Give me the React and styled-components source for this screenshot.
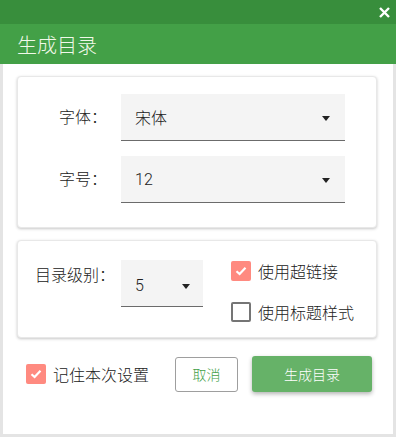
import React from "react";
import styled, { createGlobalStyle } from "styled-components";

const Global = createGlobalStyle`
  html, body { margin: 0; padding: 0; background: #fff; }
  body { font-family: Roboto, "Noto Sans CJK SC", sans-serif; }
  * { box-sizing: border-box; }
`;

const Window = styled.div`
  width: 396px;
  height: 437px;
  display: flex;
  flex-direction: column;
  background: #fff;
`;

const TopBar = styled.div`
  height: 24px;
  background: #388e3c;
  display: flex;
  align-items: center;
  justify-content: flex-end;
  padding-right: 6px;
`;

const CloseButton = styled.button`
  border: 0;
  background: transparent;
  padding: 0;
  width: 11px;
  height: 11px;
  display: flex;
  cursor: pointer;
`;

const TitleBand = styled.div`
  height: 40px;
  background: #43a047;
  display: flex;
  align-items: center;
  padding-left: 17px;
  color: #f1f8e9;
  font-size: 20px;
  font-weight: 300;
`;

const Body = styled.div`
  flex: 1;
  border: 3px solid #e4e4e4;
  border-top: 0;
  padding: 12px 16px 0 14px;
  display: flex;
  flex-direction: column;
  gap: 12px;
`;

const Card = styled.div`
  background: #fff;
  border-radius: 4px;
  border: 1px solid #e8e8e8;
  box-shadow: 0 1px 3px rgba(0, 0, 0, 0.22);
  height: ${(p) => p.$h}px;
`;

const FontCard = styled(Card)`
  display: grid;
  grid-template-columns: 48px 224px;
  column-gap: 14px;
  row-gap: 15px;
  align-content: start;
  align-items: center;
  padding: 17px 0 0 41px;
`;

const Label = styled.div`
  font-size: 16px;
  font-weight: 300;
  color: #212121;
  line-height: 22px;
  white-space: nowrap;
`;

const Field = styled.div`
  height: 47px;
  width: ${(p) => p.$w}px;
  background: #f4f4f4;
  border-bottom: 1px solid #6b6b6b;
  display: flex;
  align-items: center;
  justify-content: space-between;
  padding: 0 ${(p) => p.$pr}px 0 14px;
  font-size: 16px;
  font-weight: 300;
  color: #212121;
`;

const Arrow = styled.span`
  width: 0;
  height: 0;
  border-left: 4px solid transparent;
  border-right: 4px solid transparent;
  border-top: 5px solid #222;
  margin-top: 2px;
`;

const LevelCard = styled(Card)`
  display: flex;
  align-items: flex-start;
  padding: 19px 0 0 17px;
`;

const LevelLabel = styled(Label)`
  margin-top: 5px;
  width: 86px;
`;

const Options = styled.div`
  display: flex;
  flex-direction: column;
  gap: 19px;
  margin-left: 28px;
`;

const CheckRow = styled.label`
  display: flex;
  align-items: center;
  gap: 7px;
  height: 22px;
  font-size: 16px;
  font-weight: 300;
  color: #212121;
  white-space: nowrap;
`;

const Box = styled.span`
  width: 20px;
  height: 20px;
  border-radius: 2px;
  display: flex;
  align-items: center;
  justify-content: center;
  background: ${(p) => (p.$checked ? "#ff8a80" : "#fff")};
  border: ${(p) => (p.$checked ? "0" : "2px solid #757575")};
`;

const Footer = styled.div`
  display: flex;
  align-items: center;
  margin-top: 6px;
  padding-left: 9px;
`;

const CancelButton = styled.button`
  margin-left: 26px;
  width: 63px;
  height: 35px;
  border: 1px solid #9e9e9e;
  border-radius: 3px;
  background: #fff;
  color: #43a047;
  font-family: inherit;
  font-size: 14px;
  font-weight: 300;
  padding: 0;
`;

const PrimaryButton = styled.button`
  margin-left: 14px;
  width: 120px;
  height: 36px;
  border: 0;
  border-radius: 3px;
  background: #66b268;
  color: #fff;
  font-family: inherit;
  font-size: 14px;
  font-weight: 300;
  padding: 0;
  box-shadow: 0 2px 4px rgba(0, 0, 0, 0.3);
`;

const Value = styled.span`
  margin-top: ${(p) => p.$mt || 0}px;
`;

const Check = () => (
  <svg width="12" height="10" viewBox="0 0 12 10">
    <path d="M1.5 5.2 L4.6 8 L10.5 1.8" fill="none" stroke="#fff" strokeWidth="2.2" />
  </svg>
);

const CheckBox = ({ checked, children }) => (
  <CheckRow>
    <Box $checked={checked}>{checked && <Check />}</Box>
    {children}
  </CheckRow>
);

export default function App() {
  return (
    <>
      <Global />
      <Window>
        <TopBar>
          <CloseButton aria-label="关闭">
            <svg width="11" height="11" viewBox="0 0 11 11">
              <path d="M1 1 L10 10 M10 1 L1 10" stroke="#fff" strokeWidth="2.4" />
            </svg>
          </CloseButton>
        </TopBar>
        <TitleBand>生成目录</TitleBand>
        <Body>
          <FontCard $h={152}>
            <Label>字体：</Label>
            <Field $w={224} $pr={15}>
              宋体
              <Arrow />
            </Field>
            <Label>字号：</Label>
            <Field $w={224} $pr={15}>
              12
              <Arrow />
            </Field>
          </FontCard>
          <LevelCard $h={98}>
            <LevelLabel>目录级别：</LevelLabel>
            <Field $w={82} $pr={13}>
              <Value $mt={5}>5</Value>
              <Arrow style={{ marginTop: 7 }} />
            </Field>
            <Options>
              <CheckBox checked>使用超链接</CheckBox>
              <CheckBox>使用标题样式</CheckBox>
            </Options>
          </LevelCard>
          <Footer>
            <CheckBox checked>记住本次设置</CheckBox>
            <CancelButton>取消</CancelButton>
            <PrimaryButton>生成目录</PrimaryButton>
          </Footer>
        </Body>
      </Window>
    </>
  );
}
